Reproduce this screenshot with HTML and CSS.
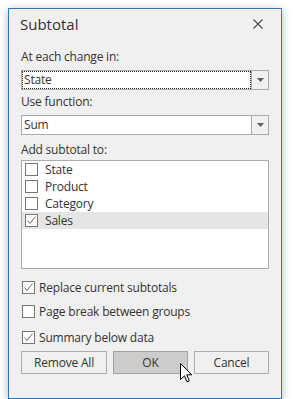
FILE: index.html
```html
<!DOCTYPE html>
<html>
<head>
<meta charset="utf-8">
<title>Subtotal</title>
<link rel="stylesheet" href="styles.css">
</head>
<body>
<div class="dialog">
  <div class="titlebar">
    <span class="title">Subtotal</span>
    <svg class="close" width="10" height="10" viewBox="0 0 10 10"><path d="M0.5 0.5 L9.5 9.5 M9.5 0.5 L0.5 9.5" stroke="#4a4a4a" stroke-width="1.1" fill="none"/></svg>
  </div>
  <div class="label l1">At each change in:</div>
  <div class="combo c1">
    <div class="field focus">State</div>
    <div class="drop"><svg width="7" height="4" viewBox="0 0 7 4"><path d="M0 0 H7 L3.5 4 Z" fill="#5f5f5f"/></svg></div>
  </div>
  <div class="label l2">Use function:</div>
  <div class="combo c2">
    <div class="field">Sum</div>
    <div class="drop"><svg width="7" height="4" viewBox="0 0 7 4"><path d="M0 0 H7 L3.5 4 Z" fill="#5f5f5f"/></svg></div>
  </div>
  <div class="label l3">Add subtotal to:</div>
  <div class="list">
    <div class="item"><span class="box"></span><span>State</span></div>
    <div class="item"><span class="box"></span><span>Product</span></div>
    <div class="item"><span class="box"></span><span>Category</span></div>
    <div class="item sel"><span class="box"><svg width="11" height="11" viewBox="0 0 11 11"><path d="M1.5 5.5 L4 8.5 L9.5 1.5" stroke="#6a6a6a" stroke-width="1" fill="none"/></svg></span><span>Sales</span></div>
  </div>
  <div class="check r1"><span class="box"><svg width="11" height="11" viewBox="0 0 11 11"><path d="M1.5 5.5 L4 8.5 L9.5 1.5" stroke="#6a6a6a" stroke-width="1" fill="none"/></svg></span><span>Replace current subtotals</span></div>
  <div class="check r2"><span class="box"></span><span>Page break between groups</span></div>
  <div class="check r3"><span class="box"><svg width="11" height="11" viewBox="0 0 11 11"><path d="M1.5 5.5 L4 8.5 L9.5 1.5" stroke="#6a6a6a" stroke-width="1" fill="none"/></svg></span><span>Summary below data</span></div>
  <div class="buttons">
    <div class="btn">Remove All</div>
    <div class="btn pressed">OK</div>
    <div class="btn">Cancel</div>
  </div>
</div>
<svg class="cursor" width="13" height="20" viewBox="0 0 13 20"><path d="M0.5 0.5 L0.5 16.5 L4.5 12.8 L7 18.8 L9.3 17.8 L6.8 11.8 L11.8 11.8 Z" fill="#fff" stroke="#000" stroke-width="1" stroke-linejoin="miter"/></svg>
</body>
</html>
```
FILE: styles.css
```css
html, body {
  margin: 0;
  padding: 0;
  background: #ffffff;
}
body {
  padding: 8px;
  font-family: "Open Sans", "Noto Sans", sans-serif;
  font-size: 12px;
  color: #333333;
}
.dialog {
  width: 248px;
  height: 377px;
  padding: 0 12px 12px 12px;
  box-sizing: content-box;
  border: 1px solid #1d7bd3;
  background: #f0f0f0;
  box-shadow: 0 2px 9px rgba(0, 0, 0, 0.28);
  display: flex;
  flex-direction: column;
}
.titlebar {
  height: 28px;
  flex: none;
  display: flex;
  align-items: center;
  justify-content: space-between;
  padding-right: 6px;
}
.title {
  font-size: 15px;
  line-height: 20px;
  margin-left: -1px;
  margin-top: 1px;
}
.close {
  display: block;
  margin-top: 1px;
}
.label {
  line-height: 16px;
  height: 16px;
  flex: none;
  letter-spacing: -0.2px;
}
.l1 { margin-top: 12px; }
.l2 { margin-top: 4px; }
.l3 { margin-top: 7px; }
.combo {
  margin-top: 5px;
  height: 20px;
  box-sizing: border-box;
  border: 1px solid #acacac;
  background: #ffffff;
  display: flex;
  flex: none;
}
.field {
  flex: 1;
  line-height: 18px;
  padding-left: 2px;
  letter-spacing: -0.2px;
}
.field.focus {
  border: 1px dotted #222;
  line-height: 16px;
  padding-left: 1px;
}
.drop {
  width: 16px;
  border-left: 1px solid #acacac;
  background: #f0f0f0;
  display: flex;
  align-items: center;
  justify-content: center;
}
.drop svg {
  display: block;
  margin-left: 1px;
}
.list {
  margin-top: 2px;
  height: 109px;
  box-sizing: border-box;
  border: 1px solid #acacac;
  background: #ffffff;
  flex: none;
}
.item {
  height: 17px;
  display: flex;
  align-items: center;
  padding-left: 3px;
  gap: 7px;
  letter-spacing: -0.2px;
}
.item.sel {
  background: #e5e5e5;
}
.box {
  width: 13px;
  height: 13px;
  box-sizing: border-box;
  border: 1px solid #767676;
  background: #ffffff;
  display: flex;
  align-items: center;
  justify-content: center;
  flex: none;
}
.box svg { display: block; }
.check {
  height: 18px;
  display: flex;
  align-items: center;
  gap: 4px;
  padding-left: 1px;
  flex: none;
  letter-spacing: -0.2px;
}
.r1 { margin-top: 9px; }
.r2 { margin-top: 6px; }
.r3 { margin-top: 8px; }
.buttons {
  margin-top: 5px;
  display: grid;
  grid-template-columns: 86px 75px 75px;
  column-gap: 6px;
  flex: none;
}
.btn {
  height: 23px;
  box-sizing: border-box;
  border: 1px solid #adadad;
  background: #f0f0f0;
  text-align: center;
  line-height: 21px;
  letter-spacing: -0.2px;
}
.btn.pressed {
  background: #cccccc;
  border-color: #a3a3a3;
}
.cursor {
  position: absolute;
  left: 180px;
  top: 363px;
  display: block;
}
```
